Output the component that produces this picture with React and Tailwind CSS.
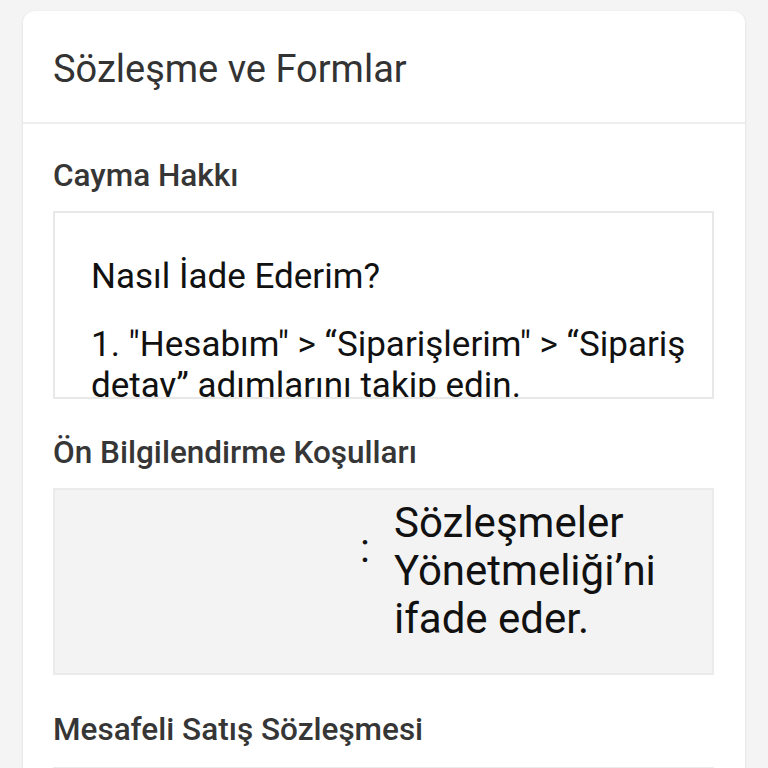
import React from 'react';

const font = { fontFamily: 'Roboto, "Noto Sans", sans-serif' };

const Label = ({ children, className = '' }) => (
    <h3 className={`text-[31.5px] leading-[38px] font-medium text-[#363636] ${className}`}>{children}</h3>
);

const App = () => {
    return (
        <div className="min-h-screen bg-[#f4f4f4] px-[23px] pt-[11px]" style={font}>
            <div className="bg-white rounded-[12px] shadow-[0_1px_3px_rgba(0,0,0,0.12)] overflow-hidden">
                {/* Header */}
                <div className="px-[30px] pt-[36px] pb-[31px] border-b-2 border-[#eeeeee]">
                    <h2 className="text-[38px] leading-[44px] text-[#333333]">Sözleşme ve Formlar</h2>
                </div>

                <div className="pl-[30px] pr-[31px] pb-[40px]">
                    {/* Cayma Hakkı */}
                    <Label className="mt-[33px] mb-[16px]">Cayma Hakkı</Label>
                    <div className="h-[188px] border-2 border-[#e8e8e8] bg-white overflow-hidden pl-[36px] pr-[20px] pt-[43px]">
                        <p className="text-[35px] leading-[41px] text-[#111111] mb-[27px]">Nasıl İade Ederim?</p>
                        <p className="text-[35px] leading-[41px] text-[#111111]">
                            1. "Hesabım" &gt; “Siparişlerim" &gt; “Sipariş detay” adımlarını takip edin.
                        </p>
                    </div>

                    {/* Ön Bilgilendirme */}
                    <Label className="mt-[35px] mb-[16px]">Ön Bilgilendirme Koşulları</Label>
                    <div className="h-[187px] border-2 border-[#ebebeb] bg-[#f3f3f3] overflow-hidden pt-[9px] flex">
                        <div className="w-[305px] shrink-0" />
                        <div className="w-[34px] shrink-0 text-[41px] leading-[48px] text-[#111111] mt-[25px]">:</div>
                        <div className="text-[42px] leading-[48px] text-[#111111]">
                            Sözleşmeler<br />Yönetmeliği’ni<br />ifade eder.
                        </div>
                    </div>

                    {/* Mesafeli Satış */}
                    <Label className="mt-[36px] mb-[18px]">Mesafeli Satış Sözleşmesi</Label>
                    <div className="h-[188px] border-2 border-[#ebebeb] bg-[#f3f3f3]" />
                </div>
            </div>
        </div>
    );
};

export default App;
